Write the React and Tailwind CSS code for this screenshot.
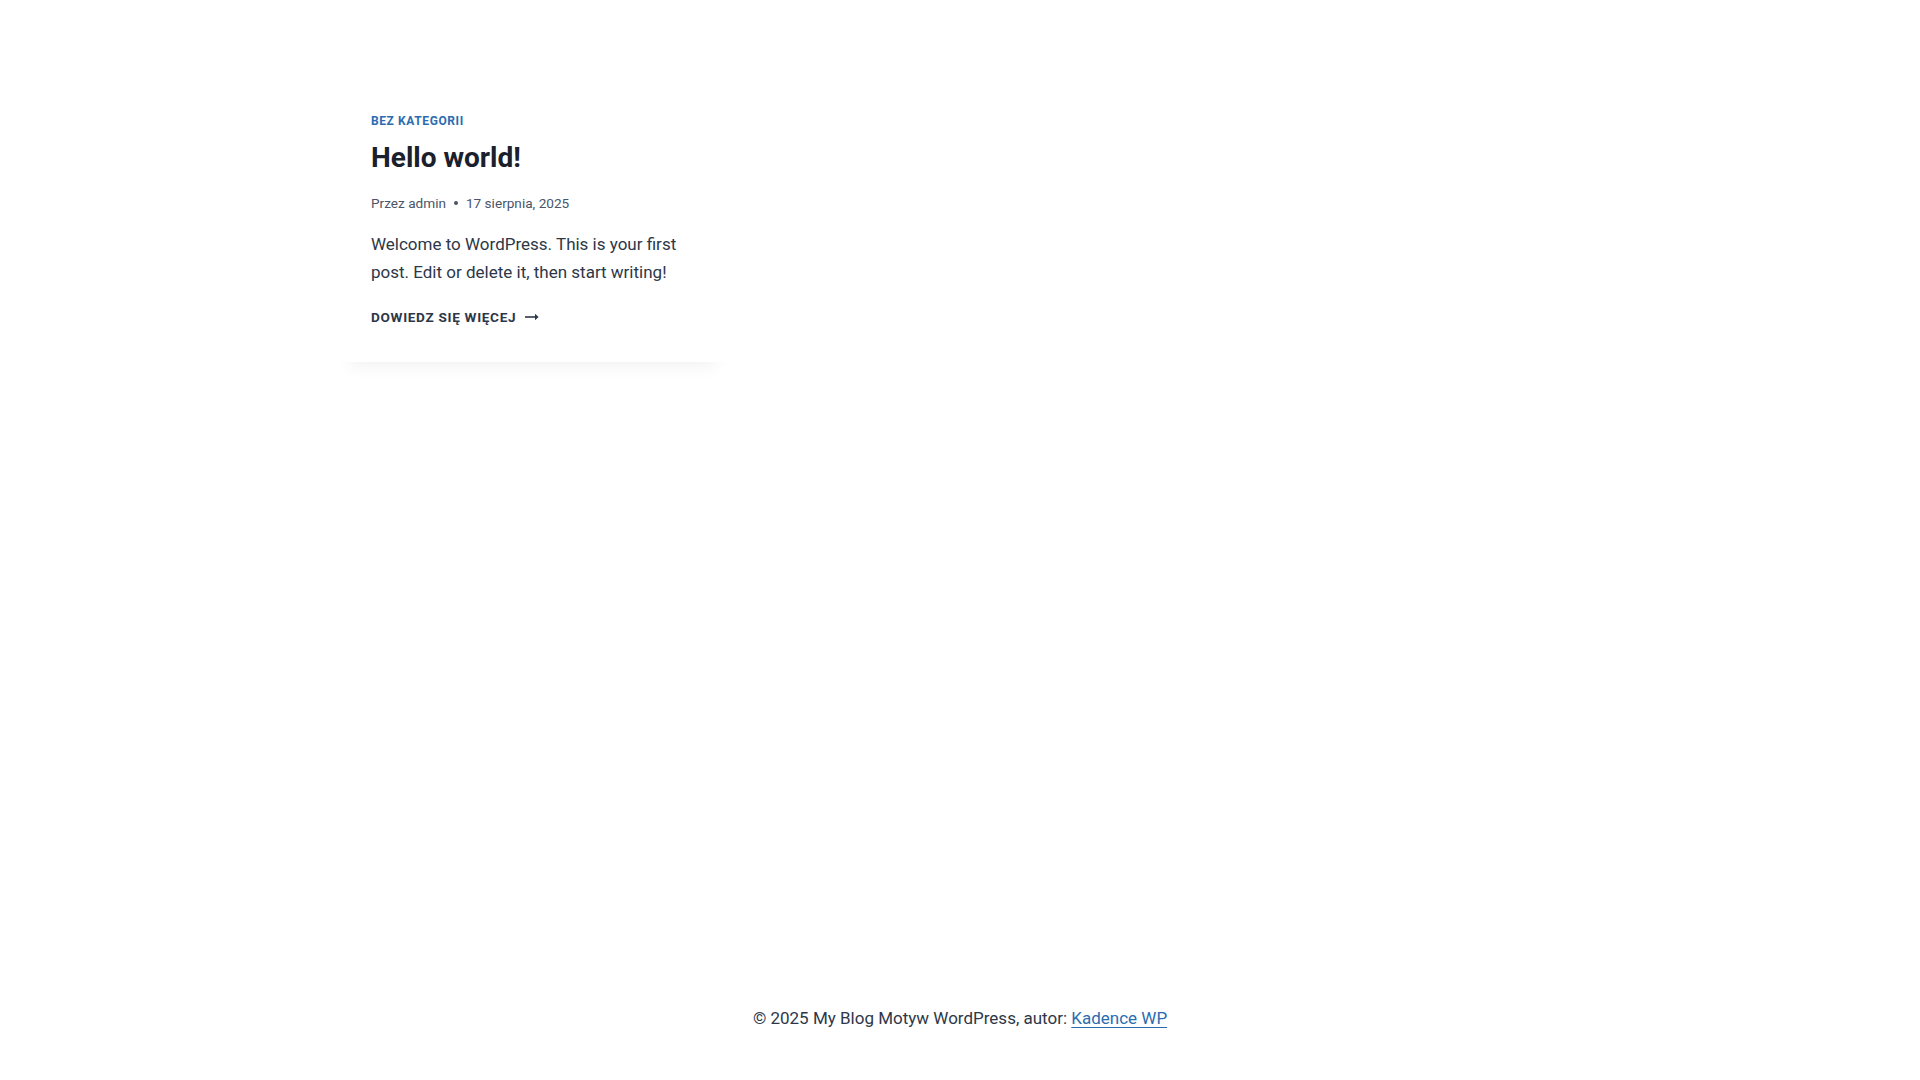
import React from "react";

function ArrowRightAlt() {
  return (
    <svg width="14" height="8" viewBox="0 0 14 8" className="ml-[9px] inline-block" aria-hidden="true">
      <path d="M0 4h11.5" stroke="#2D3748" strokeWidth="1.6" fill="none" />
      <path d="M10 0.8L13.6 4L10 7.2Z" fill="#2D3748" />
    </svg>
  );
}

export default function App() {
  return (
    <div
      className="min-h-[1080px] flex flex-col bg-white text-[#2D3748]"
      style={{ fontFamily: "Roboto, 'Noto Sans', 'Liberation Sans', sans-serif" }}
    >
      <main className="w-full max-w-[1290px] mx-auto px-6 pt-[80px]">
        <div className="grid grid-cols-3 gap-x-10">
          <article className="bg-white shadow-[0px_15px_15px_-10px_rgba(0,0,0,0.05)] px-8 pt-[33px] pb-[35px]">
            <div className="text-[12px] leading-[16px] font-bold uppercase tracking-[0.05em] text-[#2B6CB0]">
              Bez kategorii
            </div>
            <h2 className="mt-[11px] text-[28px] leading-[36px] font-bold text-[#1A202C]">Hello world!</h2>
            <div className="mt-[17px] flex items-center text-[13.6px] leading-[20px] text-[#4A5568]">
              <span>Przez admin</span>
              <span className="mx-[8px] inline-block w-[4px] h-[4px] rounded-full bg-[#4A5568]"></span>
              <span>17 sierpnia, 2025</span>
            </div>
            <p className="mt-[17px] text-[17px] leading-[28px] text-[#2D3748]">
              Welcome to WordPress. This is your first post. Edit or delete it, then start writing!
            </p>
            <div className="mt-[21px] flex items-center text-[13.6px] leading-[20px] font-bold uppercase tracking-[0.05em] text-[#2D3748]">
              <span>Dowiedz się więcej</span>
              <ArrowRightAlt />
            </div>
          </article>
          <div></div>
          <div></div>
        </div>
      </main>
      <footer className="mt-auto pb-[48px] text-center text-[17px] leading-[27px] text-[#2D3748]">
        © 2025 My Blog Motyw WordPress, autor:{" "}
        <a href="#" className="text-[#2B6CB0] underline underline-offset-[3px]">
          Kadence WP
        </a>
      </footer>
    </div>
  );
}
